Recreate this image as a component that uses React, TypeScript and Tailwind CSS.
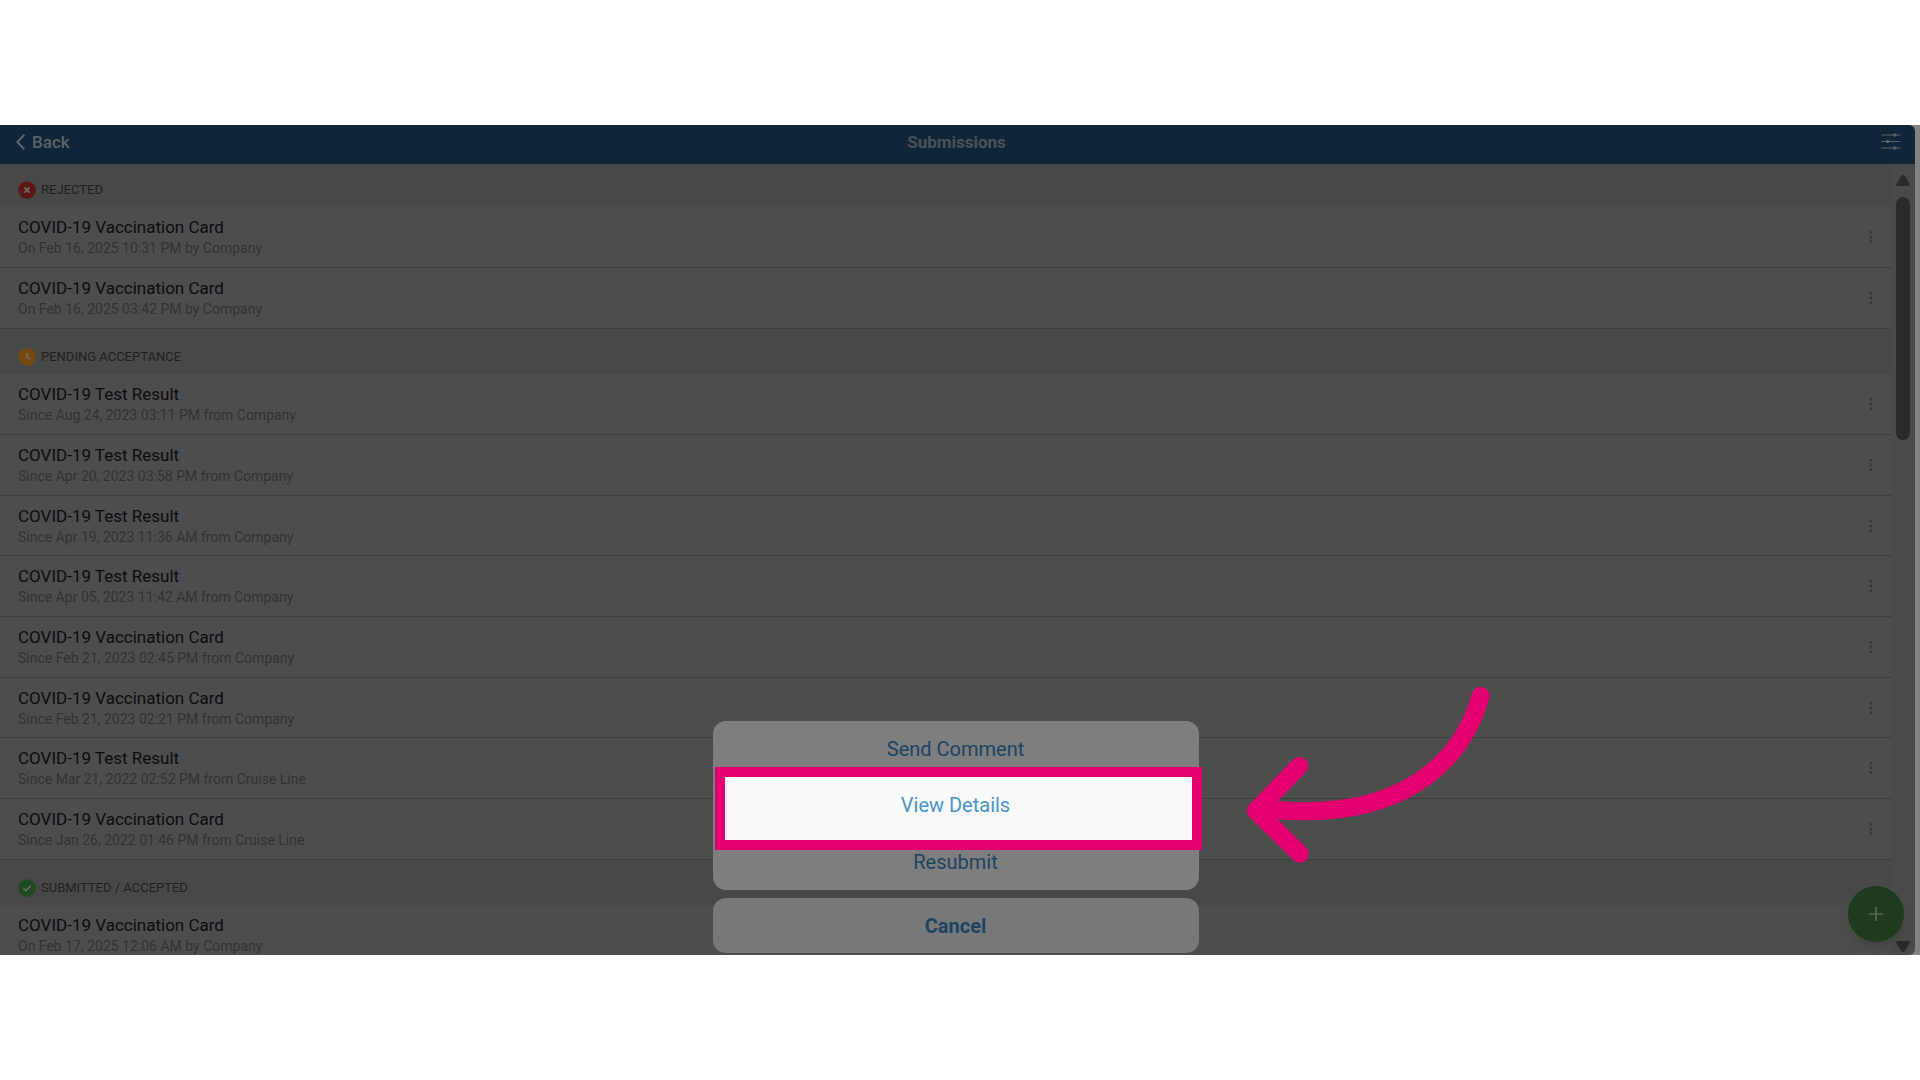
import { Fragment } from "react";

type Status = "rejected" | "pending" | "accepted";

const sections: { status: Status; label: string; items: { title: string; info: string }[] }[] = [
  {
    status: "rejected",
    label: "REJECTED",
    items: [
      { title: "COVID-19 Vaccination Card", info: "On Feb 16, 2025 10:31 PM by Company" },
      { title: "COVID-19 Vaccination Card", info: "On Feb 16, 2025 03:42 PM by Company" },
    ],
  },
  {
    status: "pending",
    label: "PENDING ACCEPTANCE",
    items: [
      { title: "COVID-19 Test Result", info: "Since Aug 24, 2023 03:11 PM from Company" },
      { title: "COVID-19 Test Result", info: "Since Apr 20, 2023 03:58 PM from Company" },
      { title: "COVID-19 Test Result", info: "Since Apr 19, 2023 11:36 AM from Company" },
      { title: "COVID-19 Test Result", info: "Since Apr 05, 2023 11:42 AM from Company" },
      { title: "COVID-19 Vaccination Card", info: "Since Feb 21, 2023 02:45 PM from Company" },
      { title: "COVID-19 Vaccination Card", info: "Since Feb 21, 2023 02:21 PM from Company" },
      { title: "COVID-19 Test Result", info: "Since Mar 21, 2022 02:52 PM from Cruise Line" },
      { title: "COVID-19 Vaccination Card", info: "Since Jan 26, 2022 01:46 PM from Cruise Line" },
    ],
  },
  {
    status: "accepted",
    label: "SUBMITTED / ACCEPTED",
    items: [{ title: "COVID-19 Vaccination Card", info: "On Feb 17, 2025 12:06 AM by Company" }],
  },
];

const statusStyles: Record<Status, { fill: string; path: string }> = {
  rejected: { fill: "#5c1719", path: "M6.4 6.4l5.2 5.2M11.6 6.4l-5.2 5.2" },
  pending: { fill: "#74480f", path: "M9 4.8v4.4l3 1.9" },
  accepted: { fill: "#1d4a20", path: "M5.2 9l2.6 2.6 5-5" },
};

const StatusIcon = ({ status }: { status: Status }) => {
  const { fill, path } = statusStyles[status];
  return (
    <svg viewBox="0 0 18 18" className="h-[18px] w-[18px]" aria-hidden="true">
      <circle cx="9" cy="9" r="8.8" fill={fill} />
      <path d={path} fill="none" stroke="#6e6a66" strokeWidth="1.7" />
    </svg>
  );
};

const Header = () => (
  <header className="grid h-[39px] shrink-0 grid-cols-3 items-center rounded-tr-md bg-[#0f2638] pb-[6px] pl-4 pr-[14px] text-[17px] leading-5 text-[#5c636a]">
    <button className="flex items-center gap-[7px] justify-self-start font-medium">
      <svg viewBox="0 0 9 16" className="h-4 w-[9px]" fill="none" stroke="currentColor" strokeWidth="2" aria-hidden="true">
        <path d="M8.3 0.8L1.3 8l7 7.2" />
      </svg>
      Back
    </button>
    <h1 className="justify-self-center pr-1 font-bold text-[#4b5157]">Submissions</h1>
    <button aria-label="Filter" className="justify-self-end">
      <svg viewBox="0 0 20 17" className="h-[17px] w-5" aria-hidden="true">
        <path d="M0.5 2h19M0.5 8.5h19M0.5 15h19" stroke="currentColor" strokeWidth="1.2" />
        <g fill="currentColor">
          <circle cx="13.7" cy="2" r="1.8" />
          <circle cx="6.5" cy="8.5" r="1.8" />
          <circle cx="13.7" cy="15" r="1.8" />
        </g>
      </svg>
    </button>
  </header>
);

const SubmissionList = () => (
  <main className="min-w-0 flex-1 overflow-hidden bg-[#4d4d4d]">
    {sections.map((section) => (
      <Fragment key={section.status}>
        <h2 className="flex h-[45px] items-end gap-[5px] bg-[#484848] pb-2 pl-[18px] text-[13px] leading-[18px] text-[#1f1f1f] first:h-[43px]">
          <StatusIcon status={section.status} />
          {section.label}
        </h2>
        <ul>
          {section.items.map((item) => (
            <li
              key={item.info}
              className="flex h-[61px] items-center justify-between border-b border-[#3d3d3d] px-[18px] nth-[3n]:h-[60px]"
            >
              <div className="pt-[2px]">
                <h3 className="text-[17px] leading-5 text-[#0c0c0c]">{item.title}</h3>
                <p className="text-[14px] leading-[22px] text-[#323232]">{item.info}</p>
              </div>
              <button aria-label="More options">
                <svg viewBox="0 0 4 14" className="h-[14px] w-1" fill="#363636" aria-hidden="true">
                  <circle cx="2" cy="2.3" r="1.4" />
                  <circle cx="2" cy="7" r="1.4" />
                  <circle cx="2" cy="11.7" r="1.4" />
                </svg>
              </button>
            </li>
          ))}
        </ul>
      </Fragment>
    ))}
  </main>
);

const Scrollbar = () => (
  <div className="flex w-6 shrink-0 flex-col items-center rounded-br-md bg-[#4a4a4a] pb-[3px] pt-[11px]" aria-hidden="true">
    <svg viewBox="0 0 14 11" className="h-[11px] w-[14px]" fill="#2a2a2a">
      <path d="M7 0Q8 0 8.8 1L13.5 8.6Q14.4 11 12 11H2Q-.4 11 .5 8.6L5.2 1Q6 0 7 0Z" />
    </svg>
    <div className="mt-[11px] h-[243px] w-[14px] rounded-full bg-[#2a2a2a]" />
    <svg viewBox="0 0 14 11" className="mt-auto h-[11px] w-[14px]" fill="#2a2a2a">
      <path d="M7 11Q8 11 8.8 10L13.5 2.4Q14.4 0 12 0H2Q-.4 0 .5 2.4L5.2 10Q6 11 7 11Z" />
    </svg>
  </div>
);

const ActionSheet = () => (
  <div className="absolute inset-x-0 bottom-[2px] flex justify-center pr-1">
    <div className="flex w-[486px] flex-col gap-2 text-[20px] leading-6 text-[#1c4463]">
      <div className="flex flex-col rounded-[13px] bg-[#7e7e7e]">
        <button className="h-14">Send Comment</button>
        <button className="relative h-14 text-[#4a95c9]">
          {/* Highlight box */}
          <span className="absolute -bottom-[17px] -top-[10px] left-[2px] -right-[3px] border-[10px] border-[#e50071] bg-[#f9f9f9]" />
          <span className="relative">View Details</span>
        </button>
        <button className="h-[57px]">Resubmit</button>
      </div>
      <button className="h-[55px] rounded-[13px] bg-[#78787a] font-bold">Cancel</button>
    </div>
  </div>
);

const Arrow = () => (
  <svg
    viewBox="0 0 244 178"
    className="absolute bottom-[91px] left-[65.1%] h-[178px] w-[244px]"
    fill="none"
    stroke="#e50071"
    strokeWidth="18"
    strokeLinecap="round"
    strokeLinejoin="round"
    aria-hidden="true"
  >
    <path d="M233.7 10C213 81.3 149.7 134 30.3 124L9 124.7" />
    <path d="M52.3 80L9 124.7l43.7 43" />
  </svg>
);

const App = () => {
  return (
    <div className="flex h-screen flex-col bg-white py-[125px] font-[Roboto,sans-serif]">
      <div className="flex min-h-0 flex-1 bg-[#828282] pr-[5px]">
        <div className="relative flex min-w-0 flex-1 flex-col">
          <Header />
          <div className="flex min-h-0 flex-1">
            <SubmissionList />
            <Scrollbar />
          </div>

          <button
            aria-label="Add submission"
            className="absolute bottom-[13px] right-[11px] flex h-14 w-14 items-center justify-center rounded-full bg-[#1e3a1f] shadow-lg"
          >
            <svg viewBox="0 0 14 14" className="h-[14px] w-[14px]" stroke="#5c665c" strokeWidth="1.6" aria-hidden="true">
              <path d="M7 0v14M0 7h14" />
            </svg>
          </button>

          <ActionSheet />
          <Arrow />
        </div>
      </div>
    </div>
  );
};

export default App;
